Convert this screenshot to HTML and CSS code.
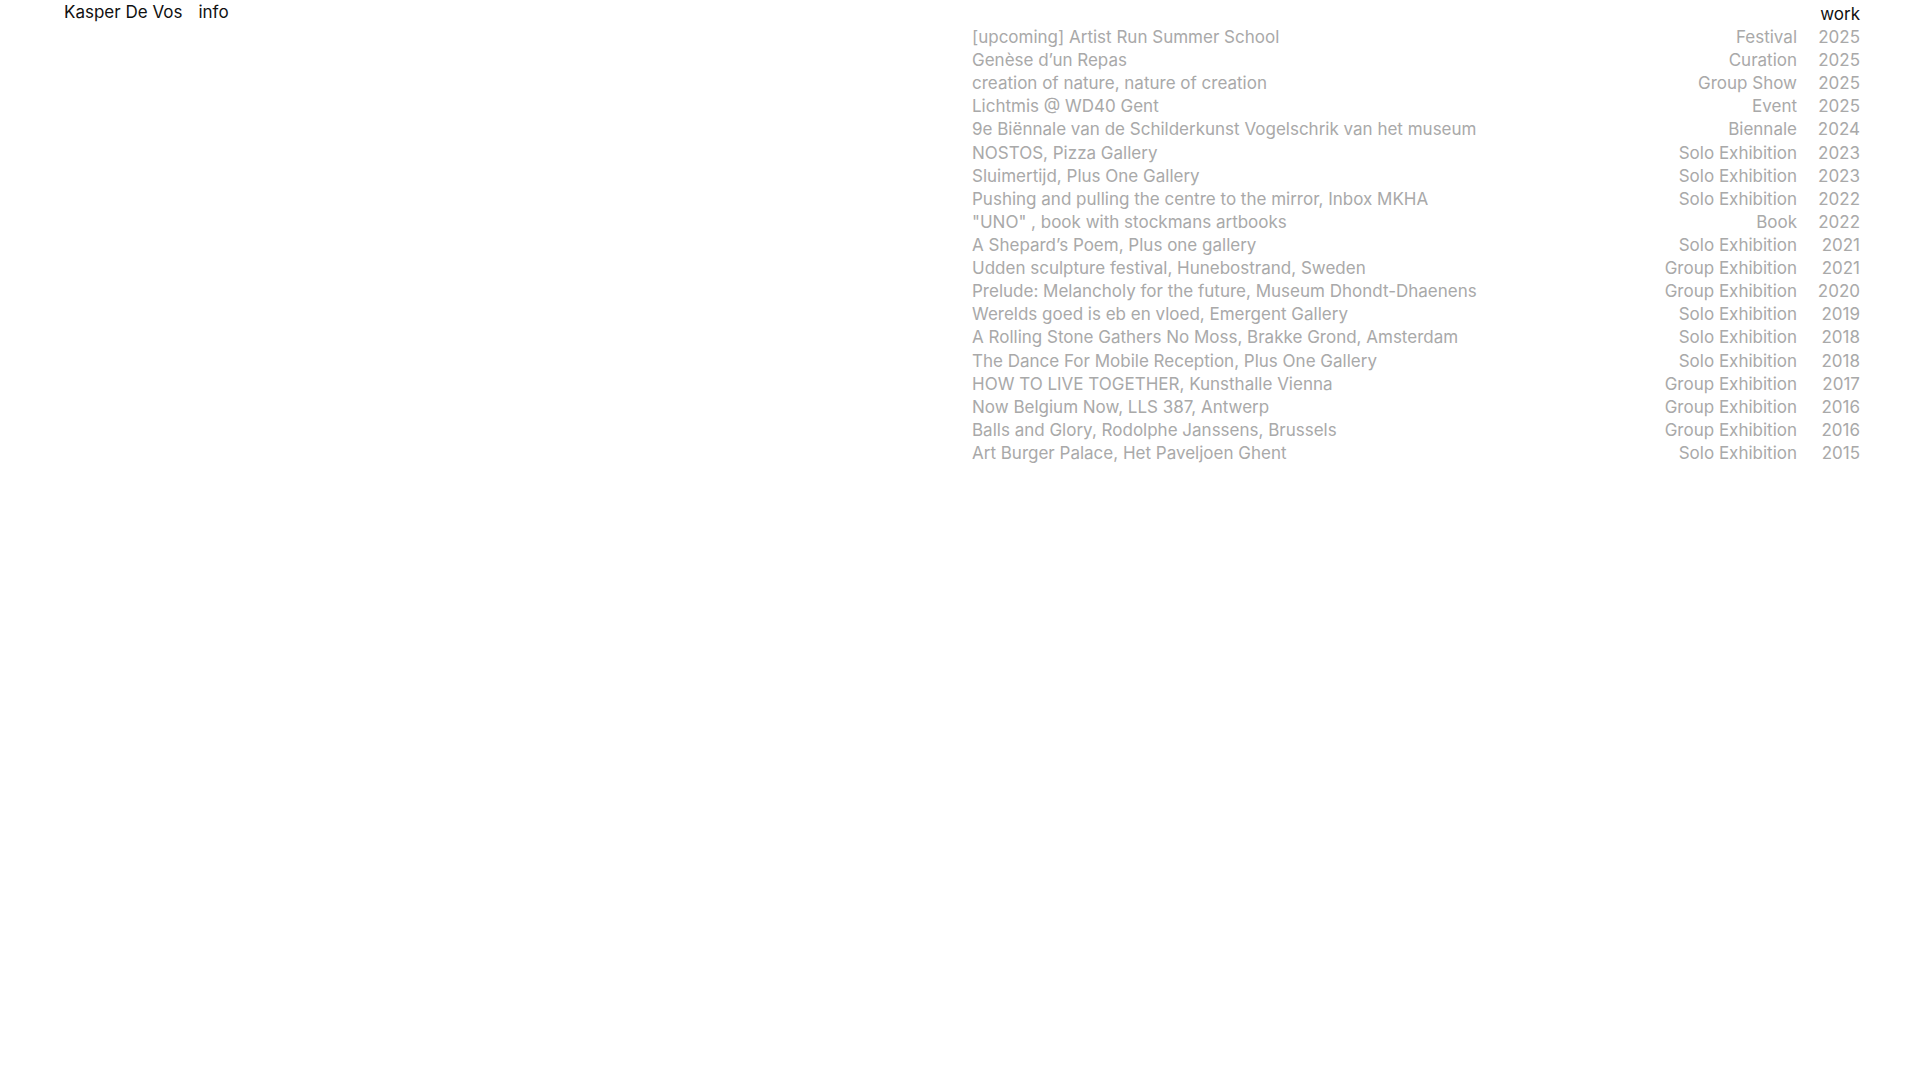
FILE: index.html
```html
<!DOCTYPE html>
<html lang="en">
<head>
<meta charset="utf-8">
<title>Kasper De Vos</title>
<link rel="stylesheet" href="styles.css">
</head>
<body>
<div class="page">
  <nav class="nav">
    <a class="nav-link" href="#">Kasper De Vos</a>
    <a class="nav-link" href="#">info</a>
  </nav>
  <section class="work">
    <div class="work-title">work</div>
    <ul class="list">
      <li class="row"><span class="title">[upcoming] Artist Run Summer School</span><span class="type">Festival</span><span class="year">2025</span></li>
      <li class="row"><span class="title">Genèse d’un Repas</span><span class="type">Curation</span><span class="year">2025</span></li>
      <li class="row"><span class="title">creation of nature, nature of creation</span><span class="type">Group Show</span><span class="year">2025</span></li>
      <li class="row"><span class="title">Lichtmis @ WD40 Gent</span><span class="type">Event</span><span class="year">2025</span></li>
      <li class="row"><span class="title">9e Biënnale van de Schilderkunst Vogelschrik van het museum</span><span class="type">Biennale</span><span class="year">2024</span></li>
      <li class="row"><span class="title">NOSTOS, Pizza Gallery</span><span class="type">Solo Exhibition</span><span class="year">2023</span></li>
      <li class="row"><span class="title">Sluimertijd, Plus One Gallery</span><span class="type">Solo Exhibition</span><span class="year">2023</span></li>
      <li class="row"><span class="title">Pushing and pulling the centre to the mirror, Inbox MKHA</span><span class="type">Solo Exhibition</span><span class="year">2022</span></li>
      <li class="row"><span class="title">"UNO" , book with stockmans artbooks</span><span class="type">Book</span><span class="year">2022</span></li>
      <li class="row"><span class="title">A Shepard’s Poem, Plus one gallery</span><span class="type">Solo Exhibition</span><span class="year">2021</span></li>
      <li class="row"><span class="title">Udden sculpture festival, Hunebostrand, Sweden</span><span class="type">Group Exhibition</span><span class="year">2021</span></li>
      <li class="row"><span class="title">Prelude: Melancholy for the future, Museum Dhondt-Dhaenens</span><span class="type">Group Exhibition</span><span class="year">2020</span></li>
      <li class="row"><span class="title">Werelds goed is eb en vloed, Emergent Gallery</span><span class="type">Solo Exhibition</span><span class="year">2019</span></li>
      <li class="row"><span class="title">A Rolling Stone Gathers No Moss, Brakke Grond, Amsterdam</span><span class="type">Solo Exhibition</span><span class="year">2018</span></li>
      <li class="row"><span class="title">The Dance For Mobile Reception, Plus One Gallery</span><span class="type">Solo Exhibition</span><span class="year">2018</span></li>
      <li class="row"><span class="title">HOW TO LIVE TOGETHER, Kunsthalle Vienna</span><span class="type">Group Exhibition</span><span class="year">2017</span></li>
      <li class="row"><span class="title">Now Belgium Now, LLS 387, Antwerp</span><span class="type">Group Exhibition</span><span class="year">2016</span></li>
      <li class="row"><span class="title">Balls and Glory, Rodolphe Janssens, Brussels</span><span class="type">Group Exhibition</span><span class="year">2016</span></li>
      <li class="row"><span class="title">Art Burger Palace, Het Paveljoen Ghent</span><span class="type">Solo Exhibition</span><span class="year">2015</span></li>
    </ul>
  </section>
</div>
</body>
</html>
```

FILE: styles.css
```css
html, body {
  margin: 0;
  padding: 0;
  background: #ffffff;
}

body {
  font-family: Inter, "Liberation Sans", Arial, sans-serif;
  font-size: 17px;
  line-height: 23px;
  color: #111111;
}

.page {
  display: grid;
  grid-template-columns: 1fr 1fr;
  column-gap: 20px;
  padding: 0 60px 0 64px;
}

.nav {
  display: flex;
  gap: 16px;
  align-items: flex-start;
  padding-top: 1px;
}

.nav-link {
  color: #111111;
  text-decoration: none;
}

.work {
  padding-top: 3px;
}

.work-title {
  text-align: right;
  color: #111111;
}

.list {
  list-style: none;
  margin: 0;
  padding: 0;
  color: #a9a9a9;
}

.row {
  display: grid;
  grid-template-columns: 1fr auto 63px;
  height: 23.12px;
  white-space: nowrap;
}

.title {
  overflow: hidden;
}

.type {
  text-align: right;
}

.year {
  text-align: right;
}
```
